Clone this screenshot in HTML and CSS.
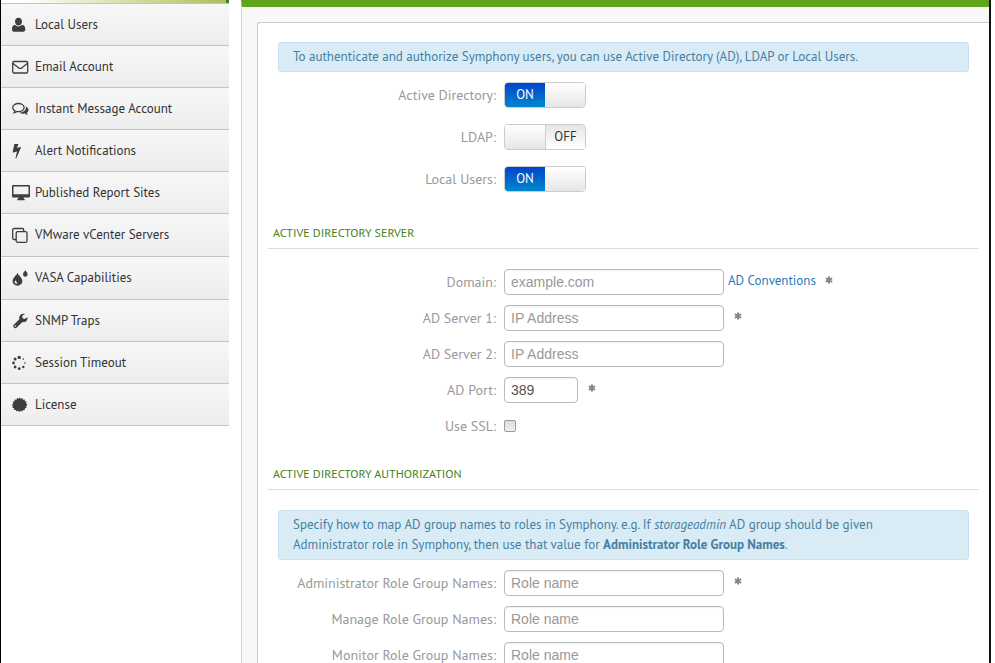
FILE: index.html
```
<!DOCTYPE html>
<html lang="en">
<head>
<meta charset="utf-8">
<title>Symphony - User Authentication</title>
<link rel="stylesheet" href="styles.css">
</head>
<body>
<svg class="defs" aria-hidden="true">
  <symbol id="asterisk" viewBox="0 0 8 8"><path d="M4 1.200v5.600M1.600 2.600l4.800 2.800M6.400 2.600L1.600 5.400" stroke="currentColor" stroke-width="2" stroke-linecap="round"/></symbol>
</svg>
<div class="app">
  <nav class="sidebar" aria-label="Settings">
    <div class="strip"></div>
    <ul>
      <li><a href="#"><svg class="icon" viewBox="0 0 18 16"><path d="M6.500.8c2.100 0 3.500 1.500 3.500 3.700 0 2.300-1.500 4.100-3.500 4.100S3 6.800 3 4.500C3 2.300 4.400.8 6.500.8zM3 7.700c1 1.200 2.100 1.700 3.500 1.700S9 8.900 10 7.700c2.400.3 3.300 2.200 3.300 4.700 0 1.600-1 2.300-2.300 2.300H2.300C1 14.700 0 14 0 12.400c0-2.500.6-4.400 3-4.700z"/></svg><span>Local Users</span></a></li>
      <li><a href="#"><svg class="icon line" viewBox="0 0 18 16"><rect x=".7" y="2.500" width="15" height="11.500" rx="1.200"/><path d="M.9 4.200c1.800 1.600 3.700 3 5.500 4.500 1.200 1 2.400 1 3.600 0 1.800-1.500 3.700-2.900 5.500-4.500"/></svg><span>Email Account</span></a></li>
      <li><a href="#"><svg class="icon" viewBox="0 0 18 16"><path d="M6.400 2.500c3.200 0 5.700 1.800 5.700 4.100s-2.500 4.100-5.700 4.100c-.6 0-1.100-.1-1.600-.2-.8.7-1.700 1.100-2.700 1.200.5-.6.700-1.200.8-1.900C1.500 9.100.7 8 .7 6.600c0-2.300 2.500-4.100 5.700-4.100z" fill="none" stroke="currentColor" stroke-width="1.300"/><path d="M13.300 5.200c2 .7 3.200 2 3.200 3.700 0 1.200-.6 2.200-1.700 3 .1.800.6 1.400 1.100 2-1.200 0-2.200-.5-3.100-1.300-2 .4-4.200 0-5.600-1.100 3.600 0 6.800-1.900 6.800-5 0-.4-.3-.9-.7-1.300z"/></svg><span>Instant Message Account</span></a></li>
      <li><a href="#"><svg class="icon" viewBox="0 0 18 16"><path d="M2.300 1h4.200L4.900 5l3.600-.9c.4 0 .6.200.4.600L4.300 15.200c-.2.400-.9.300-.8-.2L5 8.500l-3.700.9c-.4.1-.7-.1-.6-.5z"/></svg><span>Alert Notifications</span></a></li>
      <li><a href="#"><svg class="icon" viewBox="0 0 18 16"><path fill-rule="evenodd" d="M1.300 0h15.400C17.500 0 18 .5 18 1.300v9.900c0 .8-.5 1.300-1.300 1.300h-5.200l.6 1.500h.6v1.300H5.300V14h.6l.6-1.500H1.300C.5 12.500 0 12 0 11.200V1.300C0 .5.500 0 1.300 0zm.2 1.500v7.700h15V1.500z"/></svg><span>Published Report Sites</span></a></li>
      <li class="tall"><a href="#"><svg class="icon line" viewBox="0 0 18 16"><rect x="4.200" y="4.600" width="10.800" height="10.700" rx="1.500"/><path d="M4 12.500H2.200C1.200 12.500.7 12 .7 11V3C.7 2 1.200 1.500 2.200 1.500h8c1 0 1.500.5 1.500 1.500v1.500"/></svg><span>VMware vCenter Servers</span></a></li>
      <li class="tall"><a href="#"><svg class="icon" viewBox="0 0 18 16"><path fill-rule="evenodd" d="M5.500 2.700c.7 2.500 4.900 5 4.900 8.400 0 2.700-2.200 4.600-4.900 4.600S.6 13.800.6 11.100C.6 7.700 4.800 5.200 5.500 2.700zM2.700 11.200c-.2 1.300.7 2.300 1.700 2.500.9.100 1.200-.7.600-1.200-.9-.7-1-1.400-.9-2.300z"/><path d="M13.300 0c.4 1.500 2.300 2.600 2.300 4.300 0 1.400-1 2.400-2.300 2.400S11 5.700 11 4.300C11 2.600 12.900 1.500 13.300 0z"/></svg><span>VASA Capabilities</span></a></li>
      <li><a href="#"><svg class="icon" viewBox="0 0 18 16"><path fill-rule="evenodd" d="M15.400 4.200c.8 3-1.900 5.700-5 4.900L4.800 14.600c-1.700 1.700-4.800-1.100-3.100-2.900l5.700-5.500C6.300 3 9.500-.1 13 1.100l-2.700 1.700.1 2.100 1.900 1.100zM3.400 12.200a.8.800 0 1 0 0 1.600.8.800 0 0 0 0-1.600z"/></svg><span>SNMP Traps</span></a></li>
      <li><a href="#"><svg class="icon" viewBox="0 0 18 16"><circle cx="7.200" cy="2.400" r="1.700"/><circle cx="3.100" cy="4" r="1.500"/><circle cx="1.500" cy="8" r="1.400"/><circle cx="3.100" cy="12" r="1.400"/><circle cx="7.200" cy="13.700" r="1.400"/><circle cx="11.300" cy="12" r="1.200"/><circle cx="12.900" cy="8" r=".8"/><circle cx="11.300" cy="4" r=".8"/></svg><span>Session Timeout</span></a></li>
      <li><a href="#"><svg class="icon" viewBox="0 0 18 16"><path d="M7.500.5l1.200 1.300 1.600-.8.700 1.700 1.800-.2.100 1.800 1.700.5-.5 1.700 1.400 1.300-1.400 1.200.5 1.700-1.700.6-.1 1.700-1.800-.1-.7 1.600-1.600-.8-1.200 1.400-1.200-1.400-1.600.8-.7-1.600-1.800.1-.1-1.700-1.700-.6.500-1.700L-.1 7.800l1.400-1.300-.5-1.700 1.700-.5.1-1.800 1.800.2.700-1.700 1.600.8z"/></svg><span>License</span></a></li>
    </ul>
  </nav>
  <main class="content">
    <form class="panel">
      <p class="alert">To authenticate and authorize Symphony users, you can use Active Directory (AD), LDAP or Local Users.</p>
      <div class="switches">
        <div class="row"><label for="ad">Active Directory:</label><span class="switch"><input id="ad" type="checkbox" role="switch" checked><span class="on">ON</span><span class="knob"></span><span class="off">OFF</span></span></div>
        <div class="row"><label for="ldap">LDAP:</label><span class="switch"><input id="ldap" type="checkbox" role="switch"><span class="on">ON</span><span class="knob"></span><span class="off">OFF</span></span></div>
        <div class="row"><label for="local">Local Users:</label><span class="switch"><input id="local" type="checkbox" role="switch" checked><span class="on">ON</span><span class="knob"></span><span class="off">OFF</span></span></div>
      </div>
      <h2>ACTIVE DIRECTORY SERVER</h2>
      <div class="fields">
        <div class="row"><label for="domain">Domain:</label><div class="control"><input id="domain" class="text" type="text" placeholder="example.com"><a class="link" href="#">AD Conventions</a><svg class="req"><use href="#asterisk"/></svg></div></div>
        <div class="row"><label for="ad1">AD Server 1:</label><div class="control"><input id="ad1" class="text" type="text" placeholder="IP Address"><svg class="req"><use href="#asterisk"/></svg></div></div>
        <div class="row"><label for="ad2">AD Server 2:</label><div class="control"><input id="ad2" class="text" type="text" placeholder="IP Address"></div></div>
        <div class="row"><label for="port">AD Port:</label><div class="control"><input id="port" class="text short" type="text" value="389"><svg class="req"><use href="#asterisk"/></svg></div></div>
        <div class="row"><label for="ssl">Use SSL:</label><div class="control"><input id="ssl" class="tick" type="checkbox"></div></div>
      </div>
      <h2>ACTIVE DIRECTORY AUTHORIZATION</h2>
      <p class="alert spaced">Specify how to map AD group names to roles in Symphony. e.g. If <em>storageadmin</em> AD group should be given<br>Administrator role in Symphony, then use that value for <strong>Administrator Role Group Names</strong>.</p>
      <div class="fields roles">
        <div class="row"><label for="admin">Administrator Role Group Names:</label><div class="control"><input id="admin" class="text" type="text" placeholder="Role name"><svg class="req"><use href="#asterisk"/></svg></div></div>
        <div class="row"><label for="manage">Manage Role Group Names:</label><div class="control"><input id="manage" class="text" type="text" placeholder="Role name"></div></div>
        <div class="row"><label for="monitor">Monitor Role Group Names:</label><div class="control"><input id="monitor" class="text" type="text" placeholder="Role name"></div></div>
      </div>
    </form>
  </main>
</div>
</body>
</html>
```
FILE: styles.css
```
* { box-sizing: border-box; }
body {
  margin: 0;
  background: #fff;
  color: #333;
  font: 13px/20px "PT Sans", Lato, "Noto Sans", sans-serif;
}
.defs { position: absolute; width: 0; height: 0; }
.app {
  display: flex;
  gap: 12px;
  height: 100vh;
  overflow: hidden;
  margin-right: 4px;
  border-left: 1px solid #000;
  border-right: 2px solid #111;
}

/* Sidebar */
.sidebar { flex: 0 0 228px; }
.strip {
  height: 3px;
  background: linear-gradient(90deg, #fff 10%, #dbe4b4 50%, #a9c05c);
  border-right: 3px solid #3f7a34;
}
.sidebar ul { margin: 0; padding: 0; list-style: none; border-top: 1px solid #c3c3c6; }
.sidebar li { height: 42px; border-bottom: 1px solid #c3c3c6; }
.sidebar li.tall { height: 43px; }
.sidebar a {
  display: flex;
  align-items: center;
  gap: 5px;
  height: 100%;
  padding-left: 11px;
  background: linear-gradient(#f7f7f8, #ededee);
  color: #333;
  text-decoration: none;
}
.icon { flex: none; width: 18px; height: 16px; fill: currentColor; color: #3e3e3e; }
.icon.line { fill: none; stroke: currentColor; stroke-width: 1.3; }

/* Main area */
.content {
  flex: 1;
  min-width: 0;
  padding: 15px 0 0 15px;
  border-top: 7px solid #5fa41a;
  border-left: 1px solid #d4d4d4;
  background: #f8f8f8;
}
.panel {
  min-height: 100%;
  border: 1px solid #ccc;
  border-right: 0;
  border-radius: 3px 0 0 0;
  background: #fff;
  padding-top: 19px;
}
.alert {
  margin: 0 20px;
  padding: 4px 14px;
  border: 1px solid #c5e3ee;
  border-radius: 3px;
  background: #d9ebf5;
  color: #4580a2;
}
.alert.spaced { margin-top: 20px; }
.row {
  display: grid;
  grid-template-columns: 238px minmax(0, 1fr);
  align-items: center;
  gap: 8px;
  min-height: 26px;
  color: #999;
}
.row > label { text-align: right; font-size: 14px; }
.switches { display: grid; gap: 16px; margin-top: 10px; padding-bottom: 6px; }
.fields { display: grid; gap: 10px; margin-top: 20px; }
.fields.roles { margin-top: 10px; }
h2 {
  margin: 25px 10px 0;
  padding: 0 5px 5px;
  border-bottom: 1px solid #ddd;
  color: #46801a;
  font-size: 12px;
  font-weight: 400;
  line-height: 20px;
}
.control { display: flex; align-items: center; }
.text {
  width: 220px;
  height: 26px;
  padding: 0 6px;
  border: 1px solid #bbb;
  border-radius: 4px;
  background: #fff;
  box-shadow: inset 0 1px 1px rgba(0, 0, 0, .06);
  color: #555;
  font: 14px "Liberation Sans", Arial, sans-serif;
}
.text.short { width: 74px; }
.text::placeholder { color: #999; opacity: 1; }
.link { margin: 0 -1px 3px 4px; color: #1f7ab8; text-decoration: none; }
.req { width: 8px; height: 8px; margin: 0 0 4px 10px; color: #888; }
.tick {
  appearance: none;
  width: 12px;
  height: 12px;
  margin: 0;
  border: 1px solid #999;
  border-radius: 2px;
  background: linear-gradient(#ddd, #eee);
}
.tick:checked { background: #1f7ab8; }

/* On/off switch */
.switch {
  position: relative;
  display: flex;
  width: 82px;
  height: 26px;
  overflow: hidden;
  border: 1px solid #ccc;
  border-radius: 4px;
}
.switch input { position: absolute; inset: 0; width: 100%; height: 100%; margin: 0; opacity: 0; cursor: pointer; }
.switch span { flex: 0 0 40px; line-height: 24px; text-align: center; }
.switch .on { display: none; background: linear-gradient(#0044cc, #0088cc); color: #fff; }
.switch .off { background: linear-gradient(#e6e6e6, #fff); border-left: 1px solid #ccc; color: #333; }
.switch .knob { background: linear-gradient(#fff, #e6e6e6); }
.switch input:checked ~ .on { display: block; }
.switch input:checked ~ .off { display: none; }
```
